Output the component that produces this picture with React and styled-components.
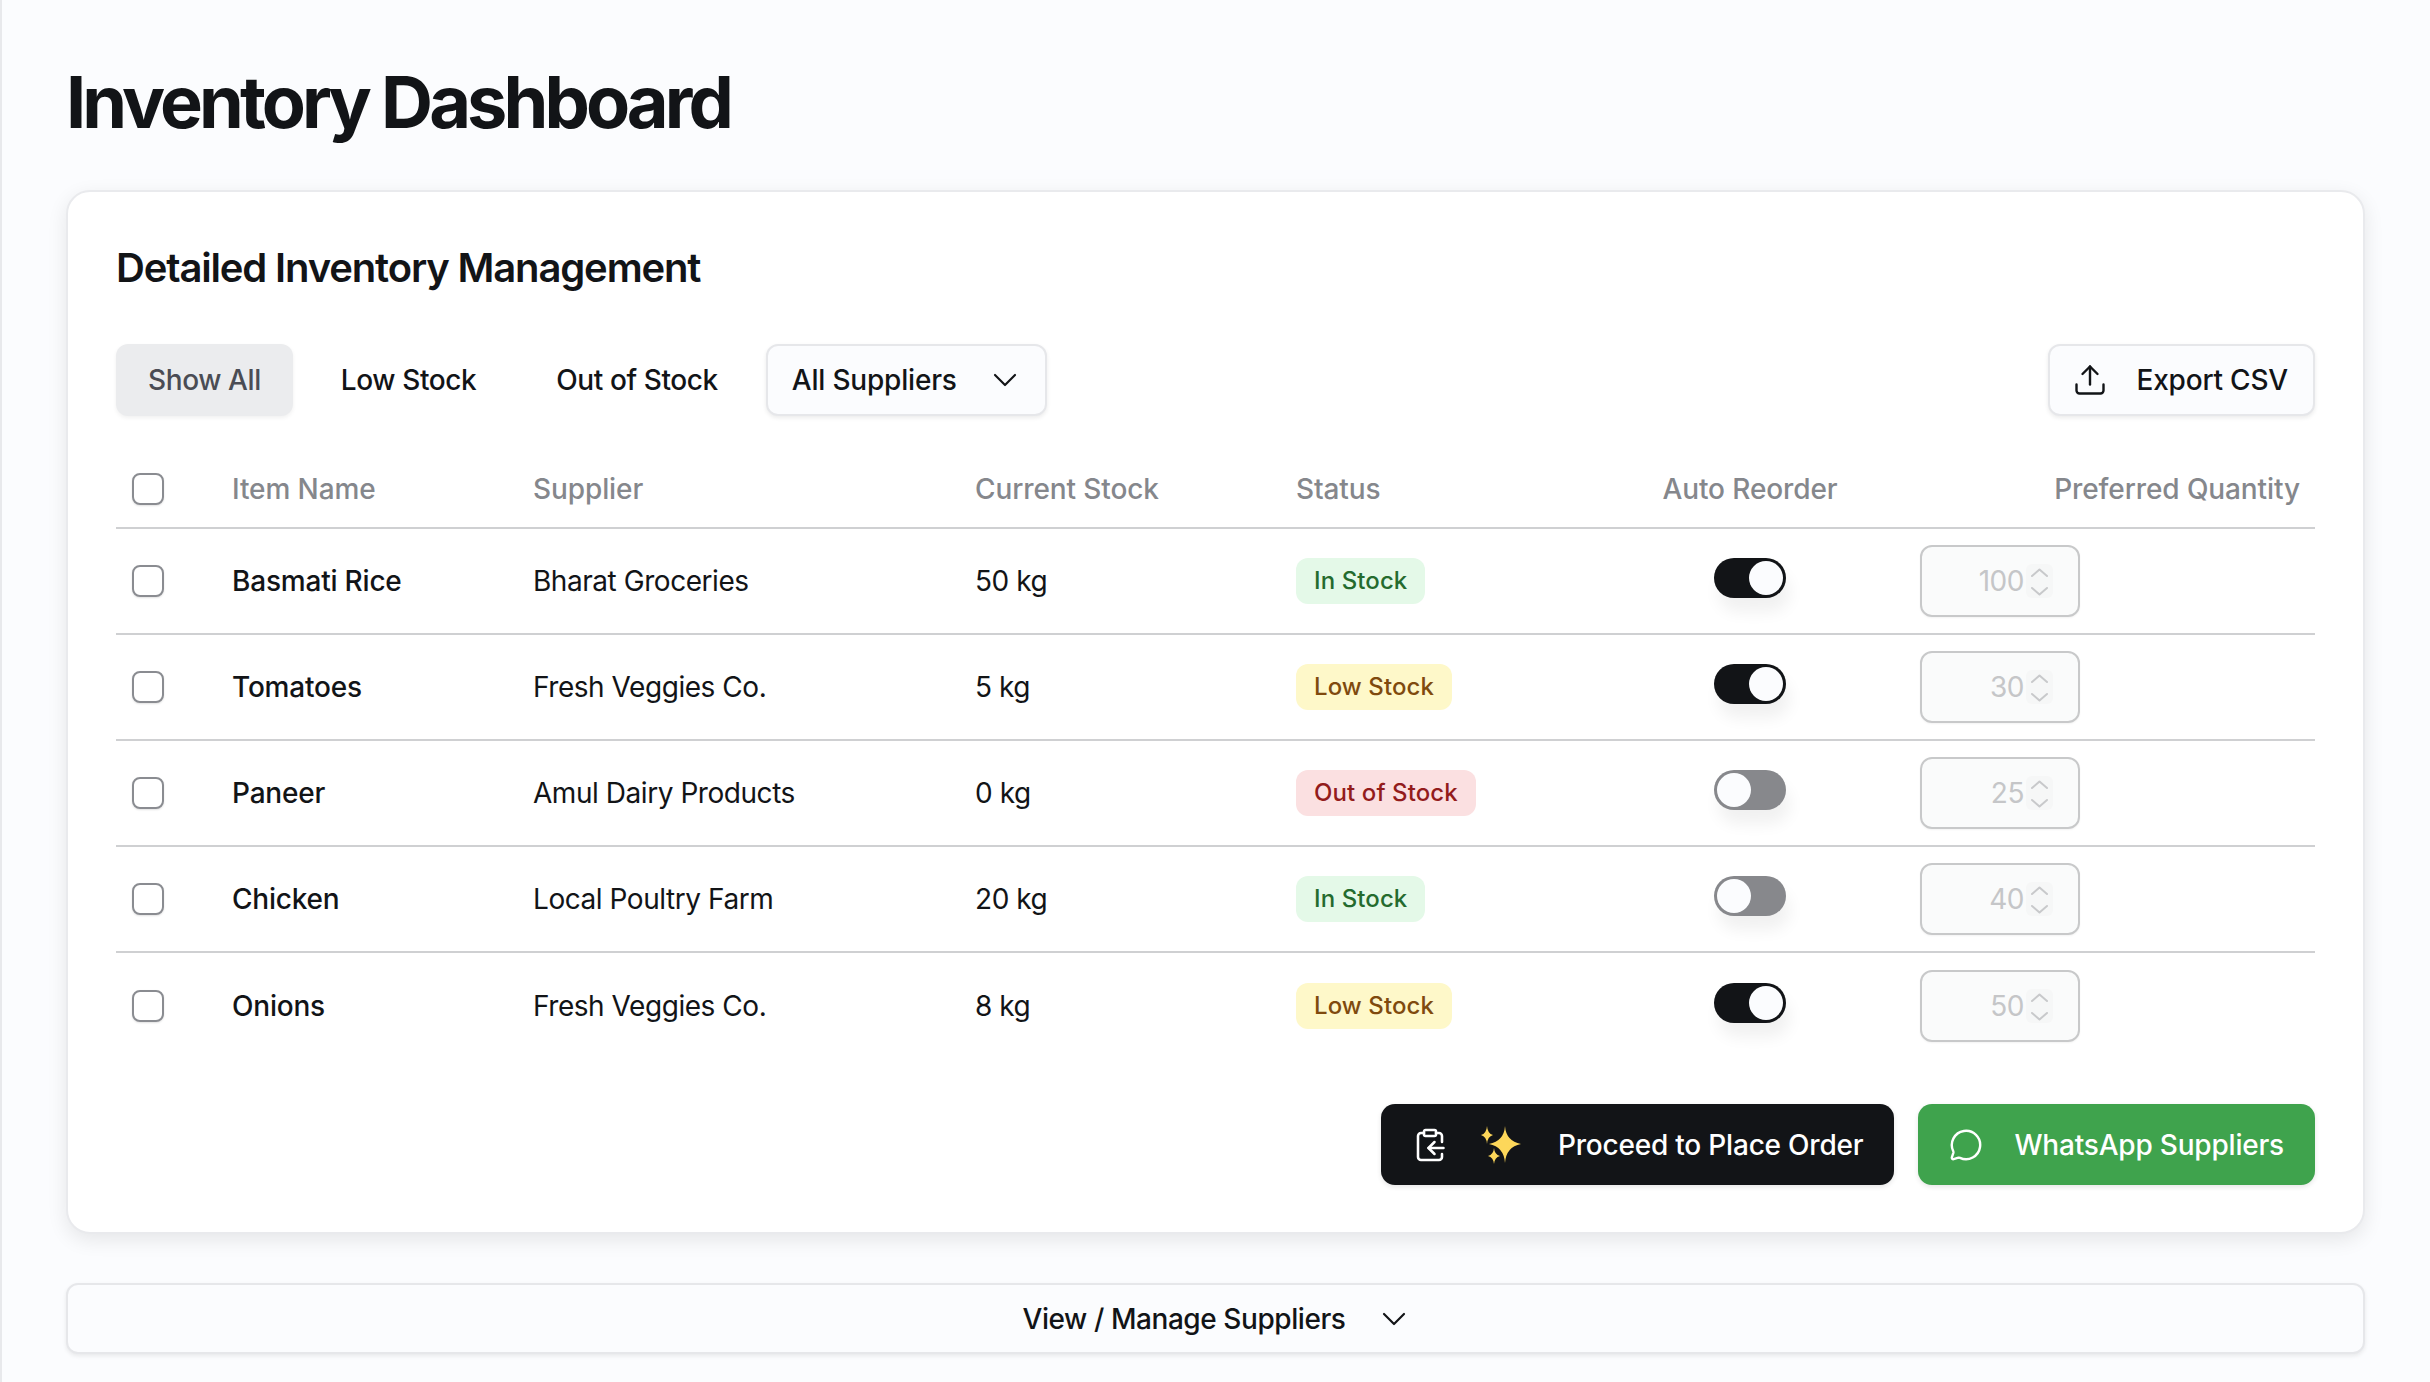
import React from "react";
import styled, { createGlobalStyle } from "styled-components";
import { ChevronDown, ClipboardCopy, MessageCircle, Upload } from "lucide-react";

const Global = createGlobalStyle`
  html, body { margin: 0; padding: 0; background: #fbfcfe; }
  body { font-family: Inter, "Liberation Sans", sans-serif; color: #121417; overflow: hidden; }
`;

const Page = styled.main`
  box-sizing: border-box;
  height: 1382px;
  overflow: hidden;
  padding: 60px 65px 0 64px;
  border-left: 2px solid #e8e9ec;
  background: #fbfcfe;
`;

const Title = styled.h1`
  margin: 0 0 46px;
  font-size: 72px;
  line-height: 84px;
  font-weight: 700;
  letter-spacing: -3.9px;
`;

const Card = styled.section`
  box-sizing: border-box;
  height: 1044px;
  padding: 52px 48px 0;
  background: #fff;
  border: 2px solid #e9eaed;
  border-radius: 24px;
  box-shadow: 0 6px 20px rgba(0, 0, 0, 0.09);
`;

const CardTitle = styled.h2`
  margin: 0 0 52px;
  font-size: 40px;
  line-height: 48px;
  font-weight: 600;
  letter-spacing: -1.15px;
`;

const Toolbar = styled.div`
  display: flex;
  align-items: center;
  gap: 16px;
  height: 72px;
  margin-bottom: 35px;
`;

const Filter = styled.button`
  height: 72px;
  padding: 0 32px;
  border: 0;
  border-radius: 12px;
  font: 500 28px Inter, sans-serif;
  letter-spacing: -0.4px;
  color: ${(p) => (p.$active ? "#4a4c54" : "#121417")};
  background: ${(p) => (p.$active ? "#ebecee" : "transparent")};
  box-shadow: ${(p) => (p.$active ? "0 2px 4px rgba(0,0,0,.06)" : "none")};
`;

const Outline = styled.button`
  display: flex;
  align-items: center;
  box-sizing: border-box;
  height: 72px;
  padding: 0 ${(p) => p.$right}px 0 ${(p) => p.$left}px;
  border: 2px solid #e6e7ea;
  border-radius: 12px;
  font: 500 28px Inter, sans-serif;
  letter-spacing: -0.2px;
  color: #121417;
  background: #fbfcfe;
  box-shadow: 0 2px 4px rgba(0, 0, 0, 0.08);
  gap: ${(p) => p.$gap}px;
`;

const Spacer = styled.div`
  flex: 1;
`;

const Row = styled.div`
  display: grid;
  grid-template-columns: 100px 301px 442px 321px 316px 308px 1fr;
  align-items: center;
  height: ${(p) => (p.$head ? 78 : 106)}px;
  border-bottom: ${(p) => (p.$last ? "0" : "2px solid #cfd0d2")};
  box-sizing: border-box;
  font-size: 28px;
  font-weight: ${(p) => (p.$head ? 500 : 400)};
  letter-spacing: ${(p) => (p.$head ? "-0.1px" : "-0.45px")};
  color: ${(p) => (p.$head ? "#85878c" : "#121417")};
`;

const Cell = styled.div`
  padding: 0 ${(p) => (p.$align === "right" ? 15 : 16)}px 0 16px;
  white-space: nowrap;
  text-align: ${(p) => p.$align || "left"};
  font-weight: ${(p) => p.$weight || "inherit"};
  letter-spacing: ${(p) => (p.$weight ? "-0.2px" : "inherit")};
`;

const Check = styled.span`
  display: block;
  box-sizing: border-box;
  width: 32px;
  height: 32px;
  border: 2px solid #8a8c91;
  border-radius: 8px;
  background: #fff;
  box-shadow: 0 1px 2px rgba(0, 0, 0, 0.12);
`;

const badge = {
  in: ["#e4f9e8", "#246b2e"],
  low: ["#fef8c9", "#7f4a0e"],
  out: ["#fbe0e1", "#931c1c"],
};

const Badge = styled.span`
  display: inline-block;
  height: 46px;
  line-height: 46px;
  padding: 0 18px;
  border-radius: 12px;
  font-size: 24px;
  font-weight: 500;
  letter-spacing: 0.1px;
  background: ${(p) => badge[p.$kind][0]};
  color: ${(p) => badge[p.$kind][1]};
`;

const Toggle = styled.span`
  display: block;
  box-sizing: border-box;
  width: 72px;
  height: 40px;
  margin: -6px auto 0;
  padding: 3px;
  border-radius: 20px;
  background: ${(p) => (p.$on ? "#121417" : "#87888c")};
  box-shadow: 4px 14px 16px rgba(0, 0, 0, 0.06);
`;

const Thumb = styled.span`
  display: block;
  width: 34px;
  height: 34px;
  border-radius: 50%;
  background: #fbfcfe;
  margin-left: ${(p) => (p.$on ? 32 : 0)}px;
`;

const Qty = styled.div`
  display: flex;
  align-items: center;
  justify-content: flex-end;
  box-sizing: border-box;
  width: 160px;
  height: 72px;
  padding-right: 25px;
  border: 2px solid #c8c9ca;
  border-radius: 12px;
  background: #fafbfb;
  color: #c5c6c8;
  box-shadow: 0 1px 2px rgba(0, 0, 0, 0.05);
`;

const Stepper = styled.svg`
  width: 27px;
  height: 34px;
  margin-left: 2px;
  border-radius: 6px;
  background: #f6f7f7;
  fill: none;
  stroke: #c8c9cb;
  stroke-width: 2;
  stroke-linecap: round;
  stroke-linejoin: round;
`;

const Footer = styled.div`
  display: flex;
  justify-content: flex-end;
  gap: 24px;
  margin-top: 45px;
`;

const Action = styled.button`
  display: flex;
  align-items: center;
  height: 81px;
  padding: 0 31px;
  border: 0;
  border-radius: 14px;
  font: 500 28px Inter, sans-serif;
  letter-spacing: -0.2px;
  color: #fff;
  background: ${(p) => (p.$green ? "#3fa34d" : "#121417")};
  box-shadow: 0 2px 5px rgba(0, 0, 0, 0.1);
`;

const Sparkle = styled.svg`
  width: 40px;
  height: 38px;
  margin: 0 37px 0 33px;
  fill: #fdd75a;
`;

const Collapse = styled.button`
  display: flex;
  align-items: center;
  justify-content: center;
  gap: 29px;
  box-sizing: border-box;
  width: 100%;
  height: 71px;
  margin-top: 49px;
  padding: 0 0 0 6px;
  border: 2px solid #e6e7ea;
  border-radius: 12px;
  font: 500 28px Inter, sans-serif;
  letter-spacing: -0.43px;
  color: #121417;
  background: #fbfcfe;
  box-shadow: 0 2px 4px rgba(0, 0, 0, 0.08);
`;

const items = [
  ["Basmati Rice", "Bharat Groceries", "50 kg", "in", true, 100],
  ["Tomatoes", "Fresh Veggies Co.", "5 kg", "low", true, 30],
  ["Paneer", "Amul Dairy Products", "0 kg", "out", false, 25],
  ["Chicken", "Local Poultry Farm", "20 kg", "in", false, 40],
  ["Onions", "Fresh Veggies Co.", "8 kg", "low", true, 50],
];

const labels = { in: "In Stock", low: "Low Stock", out: "Out of Stock" };

const App = () => (
  <Page>
    <Global />
    <Title>Inventory Dashboard</Title>
    <Card>
      <CardTitle>Detailed Inventory Management</CardTitle>
      <Toolbar>
        <Filter $active>Show All</Filter>
        <Filter>Low Stock</Filter>
        <Filter>Out of Stock</Filter>
        <Outline $left={24} $right={20} $gap={28}>
          All Suppliers
          <ChevronDown size={40} strokeWidth={1.3} />
        </Outline>
        <Spacer />
        <Outline $left={22} $right={25} $gap={29}>
          <Upload size={36} strokeWidth={1.6} />
          Export CSV
        </Outline>
      </Toolbar>
      <Row $head>
        <Cell><Check /></Cell>
        <Cell>Item Name</Cell>
        <Cell>Supplier</Cell>
        <Cell>Current Stock</Cell>
        <Cell>Status</Cell>
        <Cell $align="center">Auto Reorder</Cell>
        <Cell $align="right">Preferred Quantity</Cell>
      </Row>
      {items.map(([name, supplier, stock, kind, on, qty], i) => (
        <Row key={name} $last={i === items.length - 1}>
          <Cell><Check /></Cell>
          <Cell $weight={500}>{name}</Cell>
          <Cell>{supplier}</Cell>
          <Cell>{stock}</Cell>
          <Cell><Badge $kind={kind}>{labels[kind]}</Badge></Cell>
          <Cell><Toggle $on={on}><Thumb $on={on} /></Toggle></Cell>
          <Cell>
            <Qty>
              {qty}
              <Stepper viewBox="0 0 27 34">
                <path d="M6 12l7.500-6.500 7.500 6.500M6 24l7.500 6.500 7.500-6.500" />
              </Stepper>
            </Qty>
          </Cell>
        </Row>
      ))}
      <Footer>
        <Action>
          <ClipboardCopy size={36} strokeWidth={1.7} />
          <Sparkle viewBox="0 0 40 38">
            <path d="M24 0Q25 15 40 18Q25 21 24 37Q23 21 8 18Q23 15 24 0z" />
            <path d="M6 0Q6.500 7.500 12 9Q6.500 10.500 6 18Q5.500 10.500 0 9Q5.500 7.500 6 0z" />
            <path d="M13 22Q13.500 28.500 19 30Q13.500 31.500 13 38Q12.500 31.500 7 30Q12.500 28.500 13 22z" />
          </Sparkle>
          Proceed to Place Order
        </Action>
        <Action $green>
          <MessageCircle size={34} strokeWidth={1.7} style={{ marginRight: 31 }} />
          WhatsApp Suppliers
        </Action>
      </Footer>
    </Card>
    <Collapse>
      View / Manage Suppliers
      <ChevronDown size={40} strokeWidth={1.3} />
    </Collapse>
  </Page>
);

export default App;
